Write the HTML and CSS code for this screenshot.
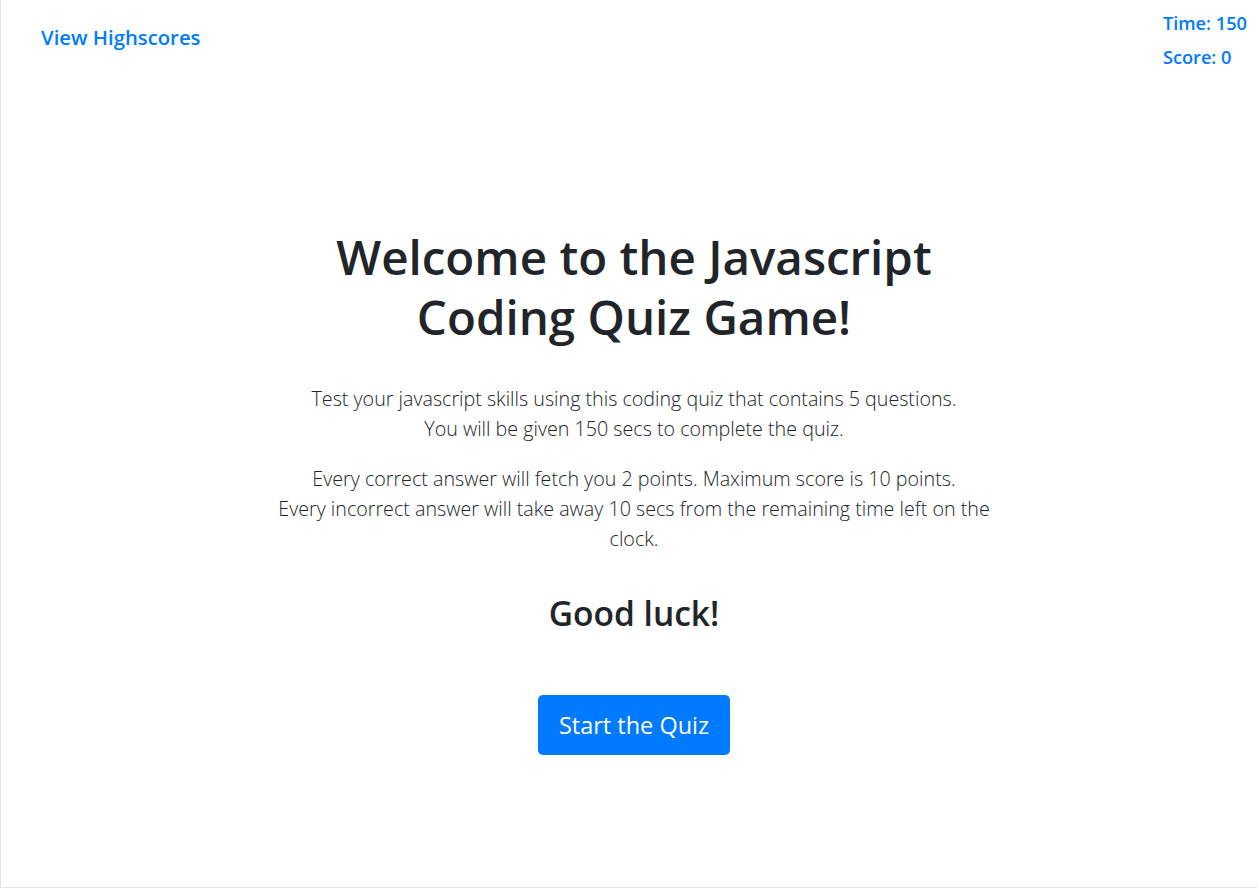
FILE: index.html
```html
<!DOCTYPE html>
<html lang="en">
<head>
<meta charset="utf-8">
<title>Javascript Coding Quiz</title>
<link rel="stylesheet" href="styles.css">
</head>
<body>
<div class="page">
  <header class="topbar">
    <a class="highscores" href="#">View Highscores</a>
    <div class="stats">
      <div class="stat">Time: 150</div>
      <div class="stat">Score: 0</div>
    </div>
  </header>
  <main class="intro">
    <h1 class="title">Welcome to the Javascript<br>Coding Quiz Game!</h1>
    <p class="lead">Test your javascript skills using this coding quiz that contains 5 questions.<br>You will be given 150 secs to complete the quiz.</p>
    <p class="lead">Every correct answer will fetch you 2 points. Maximum score is 10 points.<br>Every incorrect answer will take away 10 secs from the remaining time left on the<br>clock.</p>
    <h2 class="luck">Good luck!</h2>
    <button class="start" type="button">Start the Quiz</button>
  </main>
</div>
</body>
</html>
```

FILE: styles.css
```css
html, body {
  margin: 0;
  padding: 0;
  background: #fff;
}
body {
  font-family: "Open Sans", "Noto Sans", sans-serif;
  color: #212529;
}
.page {
  height: 888px;
  box-sizing: border-box;
  border-left: 1px solid #e4e4e4;
  border-bottom: 1px solid #e4e4e4;
  display: flex;
  flex-direction: column;
}
.topbar {
  display: flex;
  justify-content: space-between;
  align-items: flex-start;
  padding: 8px 10px 0 40px;
}
.highscores {
  color: #007bff;
  text-decoration: none;
  font-size: 20.3px;
  font-weight: 600;
  line-height: 30px;
  margin-top: 14px;
}
.stats {
  display: flex;
  flex-direction: column;
  gap: 4px;
}
.stat {
  color: #007bff;
  font-size: 18.2px;
  font-weight: 600;
  line-height: 30px;
}
.intro {
  display: flex;
  flex-direction: column;
  align-items: center;
  text-align: center;
  padding: 155px 0 0 10px;
}
.title {
  margin: 0 0 37px;
  font-size: 47.5px;
  font-weight: 600;
  line-height: 60px;
}
.lead {
  margin: 0 0 20px;
  font-size: 19.7px;
  font-weight: 300;
  line-height: 30px;
}
.luck {
  margin: 20px 0 63px;
  font-size: 33.5px;
  font-weight: 600;
  line-height: 38px;
}
.start {
  font-family: inherit;
  background: #007bff;
  color: #fff;
  border: 0;
  border-radius: 5px;
  font-size: 23.5px;
  line-height: 36px;
  padding: 12px 21px;
  cursor: pointer;
}
```
